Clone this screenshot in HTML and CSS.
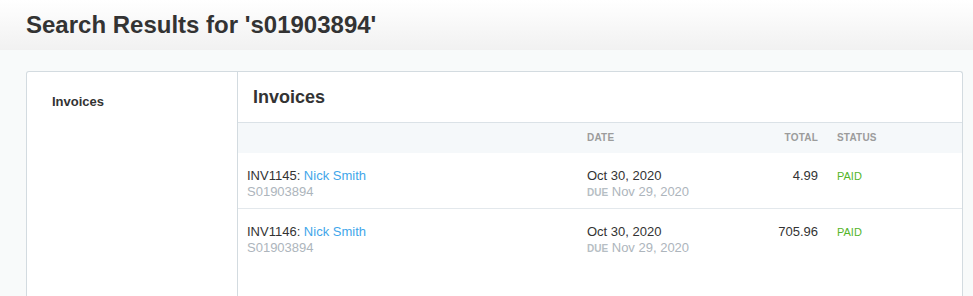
FILE: index.html
```html
<!DOCTYPE HTML>
<html>
<head>
    <title>Search Results</title>
    <meta charset="utf-8">
    <link rel="stylesheet" href="styles.css">
</head>
<body>
    <div class="page-header">
        <h1>Search Results for 's01903894'</h1>
    </div>
    <div class="card">
        <div class="sidebar">
            <a href="#" class="side-link">Invoices</a>
        </div>
        <div class="main">
            <h2>Invoices</h2>
            <div class="table">
                <div class="row head">
                    <div class="cell"></div>
                    <div class="cell">Date</div>
                    <div class="cell num">Total</div>
                    <div class="cell">Status</div>
                </div>
                <div class="row">
                    <div class="cell">
                        INV1145: <a href="#">Nick Smith</a>
                        <span class="sub">S01903894</span>
                    </div>
                    <div class="cell">
                        Oct 30, 2020
                        <span class="sub"><b>DUE</b> Nov 29, 2020</span>
                    </div>
                    <div class="cell num">4.99</div>
                    <div class="cell"><span class="paid">PAID</span></div>
                </div>
                <div class="row">
                    <div class="cell">
                        INV1146: <a href="#">Nick Smith</a>
                        <span class="sub">S01903894</span>
                    </div>
                    <div class="cell">
                        Oct 30, 2020
                        <span class="sub"><b>DUE</b> Nov 29, 2020</span>
                    </div>
                    <div class="cell num">705.96</div>
                    <div class="cell"><span class="paid">PAID</span></div>
                </div>
            </div>
        </div>
    </div>
</body>
</html>
```

FILE: styles.css
```css
body
{
    margin: 0;
    background: #f8fafa;
    color: #333;
    font-family: "Liberation Sans", Arial, sans-serif;
}

a
{
    color: #3fa6ea;
    text-decoration: none;
}

.page-header
{
    height: 50px;
    padding-left: 26px;
    display: flex;
    align-items: center;
    background: linear-gradient(#ffffff, #f1f1f1);
}

.page-header h1
{
    margin: 0;
    font-size: 24px;
    font-weight: bold;
    color: #333;
}

.card
{
    margin: 21px 10px 0 26px;
    height: 226px;
    display: flex;
    background: #fff;
    border: 1px solid #d3dbe0;
    border-bottom: none;
    border-radius: 3px 3px 0 0;
}

.sidebar
{
    width: 211px;
    flex: none;
    padding: 22px 0 0 25px;
    box-sizing: border-box;
    border-right: 1px solid #d3dbe0;
}

.side-link
{
    display: block;
    font-size: 13px;
    line-height: 15px;
    font-weight: bold;
    color: #333;
}

.main
{
    flex: 1;
}

.main h2
{
    margin: 0;
    height: 50px;
    padding-left: 15px;
    display: flex;
    align-items: center;
    font-size: 18px;
    font-weight: bold;
    border-bottom: 1px solid #dbe2e7;
}

.row
{
    display: grid;
    grid-template-columns: 340px 149px 101px 1fr;
    height: 56px;
    box-sizing: border-box;
    border-bottom: 1px solid #e3e8ec;
    font-size: 13px;
    line-height: 16px;
}

.row:last-child
{
    border-bottom: none;
}

.row .cell
{
    padding: 15px 10px 0 9px;
}

.row .num
{
    text-align: right;
}

.row.head
{
    height: 30px;
    background: #f5f8fa;
    border-bottom: none;
    font-size: 10px;
    font-weight: bold;
    color: #9c9c9c;
    text-transform: uppercase;
    letter-spacing: 0.2px;
    align-items: center;
}

.row.head .cell
{
    padding-top: 0;
}

.sub
{
    display: block;
    color: #adb5bc;
}

.sub b
{
    font-size: 10px;
    color: #b6bec4;
}

.paid
{
    font-size: 11px;
    color: #55b52a;
}
```
